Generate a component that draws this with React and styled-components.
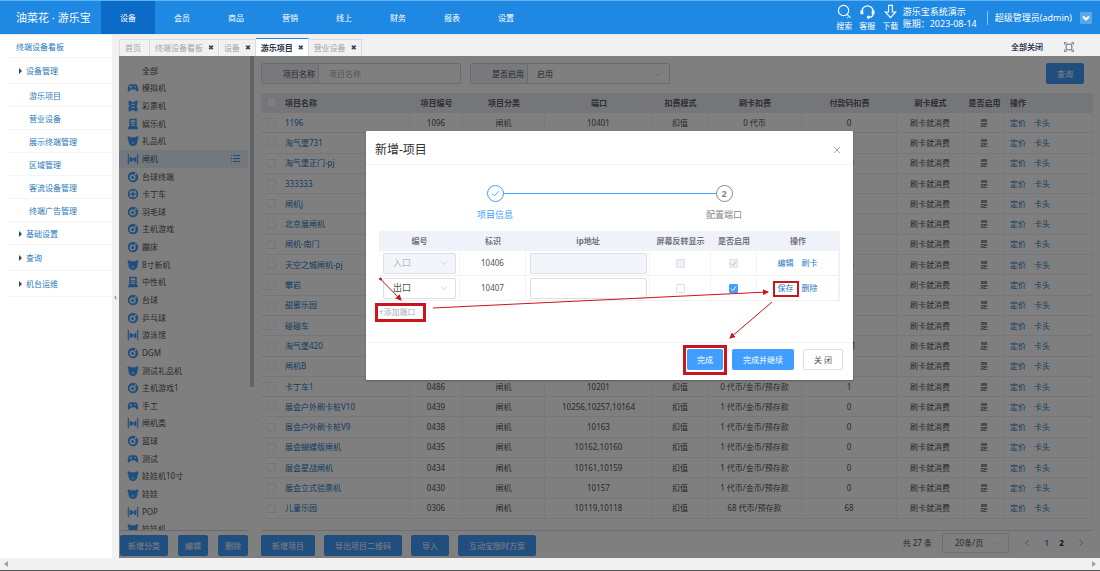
import { useState } from "react";
import styled, { createGlobalStyle, css } from "styled-components";

const GlobalStyle = createGlobalStyle`
  * { box-sizing: border-box; }
  body {
    margin: 0;
    font-family: "Noto Sans", "Noto Sans CJK SC", sans-serif;
    font-size: 8px;
    line-height: 12px;
    color: #505258;
    background: #fff;
  }
  button, input, select { font: inherit; color: inherit; margin: 0; }
  button { border: 0; padding: 0; background: none; cursor: pointer; }
  a { color: inherit; text-decoration: none; }
  ul { list-style: none; margin: 0; padding: 0; }
`;

const Shell = styled.div`
  display: flex;
  flex-direction: column;
  height: 100vh;
  border-bottom: 1px solid #555;
`;

/* header */
const Header = styled.header`
  display: flex;
  flex: none;
  height: 34px;
  border-top: 1px solid #5db2f8;
  background: #1e88e2;
  color: #fff;
`;
const Logo = styled.div`
  width: 101px;
  padding-left: 16px;
  font-size: 11px;
  line-height: 33px;
  white-space: nowrap;
`;
const TopNav = styled.nav`
  display: flex;
  flex: 1;
`;
const TopLink = styled.a`
  width: 54px;
  line-height: 33px;
  text-align: center;
  background: ${(p) => (p.$active ? "#0b6bc6" : "transparent")};
`;
const HeaderTools = styled.div`
  display: flex;
  align-items: center;
  gap: 6px;
  padding-right: 8px;
`;
const ToolButton = styled.button`
  display: flex;
  flex-direction: column;
  align-items: center;
  width: 17px;
  line-height: 13px;
  white-space: nowrap;
  svg { width: 15px; height: 15px; }
`;
const ShopInfo = styled.div`
  width: 78px;
  margin-left: -2px;
  font-size: 9px;
  line-height: 12px;
  white-space: nowrap;
`;
const UserMenu = styled.button`
  display: flex;
  align-items: center;
  gap: 8px;
  height: 14px;
  padding-left: 7px;
  border-left: 1px solid #8cc4f3;
  font-size: 9px;
  white-space: nowrap;
  svg { width: 12px; height: 12px; }
`;

/* left menu */
const Body = styled.div`
  display: flex;
  flex: 1;
  min-height: 0;
  border-top: 1px solid #e4e8ee;
`;
const Sidebar = styled.nav`
  width: 112px;
  color: #1f78b8;
`;
const SideItem = styled.a`
  display: block;
  height: ${(p) => (p.$tall ? 26 : 23)}px;
  margin-left: 8px;
  padding-left: ${(p) => (p.$level ? 21 : 8)}px;
  line-height: ${(p) => (p.$tall ? 26 : 23)}px;
  border-bottom: 1px solid #f4f4f6;
`;
const Caret = styled.span`
  display: inline-block;
  margin: 0 4px 0 3px;
  border-left: 3px solid #2c4a66;
  border-top: 3px solid transparent;
  border-bottom: 3px solid transparent;
`;
const Collapse = styled.button`
  width: 7px;
  background: #f1f1f1;
  color: #555;
  line-height: 12px;
`;

/* tabs */
const Main = styled.div`
  display: flex;
  flex-direction: column;
  flex: 1;
  min-width: 0;
`;
const TabBar = styled.div`
  display: flex;
  align-items: flex-end;
  flex: none;
  height: 21px;
  background: #f1f1f1;
`;
const Tab = styled.div`
  display: flex;
  align-items: center;
  gap: 5px;
  height: 17px;
  padding: 0 ${(p) => (p.$first ? 8 : 4)}px 0 5px;
  border: 1px solid #dcdcdc;
  border-left-width: ${(p) => (p.$first ? 1 : 0)}px;
  border-bottom: 0;
  color: #a2a5aa;
  white-space: nowrap;
  ${(p) =>
    p.$active &&
    css`
      height: 18px;
      border-top: 1px solid #1e88e2;
      background: #fff;
      color: #263445;
      font-weight: bold;
    `}
`;
const TabClose = styled.button`
  color: #2b4560;
  font-family: "DejaVu Sans", sans-serif;
  font-size: 7px;
  line-height: 12px;
`;
const TabActions = styled.div`
  display: flex;
  align-items: center;
  gap: 21px;
  height: 18px;
  margin-left: auto;
  padding-right: 26px;
  font-weight: bold;
  color: #33415c;
  svg { display: block; width: 10px; height: 10px; }
`;

const Workspace = styled.div`
  position: relative;
  display: flex;
  flex: 1;
  min-height: 0;
  background: #fff;
`;

/* category column */
const Categories = styled.aside`
  display: flex;
  flex-direction: column;
  width: 131px;
`;
const CategoryScroll = styled.div`
  display: flex;
  flex: 1;
  min-height: 0;
  overflow: hidden;
  padding-top: 6px;
`;
const CategoryList = styled.ul`
  display: grid;
  grid-auto-rows: 1fr;
  flex: 1;
  min-height: 0;
  margin: 0 2px -8px 0;
`;
const CategoryItem = styled.li`
  display: flex;
  align-items: center;
  min-height: 0;
  padding: 0 8px 0 8px;
  background: ${(p) => (p.$active ? "#e6f1fd" : "transparent")};
`;
const CategoryButton = styled.button`
  display: flex;
  align-items: center;
  flex: 1;
  gap: 3px;
  padding-left: ${(p) => (p.$plain ? 15 : 0)}px;
  svg { width: 12px; height: 12px; color: #409eff; }
`;
const ScrollThumb = styled.div`
  width: 4px;
  height: 66%;
  background: #c4c4c8;
`;
const CategoryActions = styled.div`
  display: flex;
  justify-content: space-between;
  align-items: flex-start;
  height: 28px;
  margin-right: 2px;
  padding: 4px 0 0 1px;
  border-top: 1px solid #d4d4d8;
`;
const PrimaryButton = styled.button`
  height: 21px;
  padding: 0 ${(p) => p.$pad || 8}px;
  border-radius: 2px;
  background: #409eff;
  color: #fff;
  white-space: nowrap;
`;

/* right panel */
const Content = styled.section`
  display: flex;
  flex-direction: column;
  flex: 1;
  min-width: 0;
  padding: 7px 7px 0;
`;
const FilterBar = styled.form`
  display: flex;
  gap: 9px;
  height: 21px;
  margin-bottom: 9px;
  padding-right: 9px;
  button { margin-left: auto; }
`;
const Field = styled.div`
  display: flex;
  width: 200px;
  border: 1px solid #d3d7df;
  border-radius: 2px;
`;
const FieldLabel = styled.label`
  width: 57px;
  padding-right: 3px;
  line-height: 19px;
  text-align: right;
  background: #eff2f8;
  border-right: 1px solid #d3d7df;
`;
const FieldInput = styled.input`
  flex: 1;
  min-width: 0;
  padding: 0 10px;
  border: 0;
  background: none;
  &::placeholder { color: #a9adb5; }
`;
const SelectWrap = styled.span`
  display: flex;
  align-items: center;
  flex: 1;
  min-width: 0;
  padding-right: 7px;
  svg { flex: none; width: 8px; height: 8px; color: #b4b8bf; }
`;
const PlainSelect = styled.select`
  appearance: none;
  flex: 1;
  min-width: 0;
  height: 100%;
  padding: 0 0 0 9px;
  border: 0;
  background: none;
  opacity: 1;
  &:disabled { color: #b4b8bf; }
`;
const TableWrap = styled.div`
  flex: 1;
  min-height: 0;
`;
const Check = styled.input`
  appearance: none;
  display: block;
  width: 9px;
  height: 9px;
  margin: 0 auto;
  border: 1px solid #dde0e7;
  border-radius: 1px;
  background: #fff;
  &:disabled { background: #edf0f7; }
  &:checked {
    background: #409eff url("data:image/svg+xml,%3Csvg xmlns='http://www.w3.org/2000/svg' viewBox='0 0 9 9'%3E%3Cpath d='M2 4.5l2 2 3-4' fill='none' stroke='white'/%3E%3C/svg%3E") center / 9px;
    border-color: #409eff;
  }
  &:checked:disabled {
    background: #edf0f7 url("data:image/svg+xml,%3Csvg xmlns='http://www.w3.org/2000/svg' viewBox='0 0 9 9'%3E%3Cpath d='M2 4.5l2 2 3-4' fill='none' stroke='%23b8bcc6'/%3E%3C/svg%3E") center / 9px;
    border-color: #dde0e7;
  }
`;
const Table = styled.table`
  width: 100%;
  height: 100%;
  table-layout: fixed;
  border-collapse: separate;
  border-spacing: 0;
  th, td {
    padding: 0;
    overflow: hidden;
    text-align: center;
    white-space: nowrap;
    border-bottom: 1px solid #e9ecf2;
  }
  th {
    height: 20px;
    background: #e9ecf4;
    color: #5c5f66;
  }
  td + td { border-right: 1px solid #f1f3f7; }
  th:nth-child(2), td:nth-child(2) { padding-left: 3px; text-align: left; }
  th:last-child, td:last-child { padding-left: 5px; text-align: left; }
  ${Check} { border-color: #eaecf1; }
`;
const RowLink = styled.a`
  color: #2778bf;
  & + & { margin-left: 8px; }
`;
const ContentFooter = styled.footer`
  display: flex;
  gap: 9px;
  height: 28px;
  margin-top: 11px;
  padding-top: 4px;
  border-top: 1px solid #dcdfe6;
`;
const Pagination = styled.div`
  display: flex;
  align-items: center;
  gap: 6px;
  height: 21px;
  margin-left: auto;
  margin-top: -3px;
`;
const PageSize = styled.div`
  display: flex;
  width: 67px;
  height: 20px;
  margin-left: 4px;
  border: 1px solid #dcdfe6;
  border-radius: 2px;
  select { padding-left: 12px; }
`;
const Pages = styled.div`
  display: flex;
`;
const PageButton = styled.button`
  width: ${(p) => (p.$arrow ? 24 : 15)}px;
  font-weight: bold;
  color: ${(p) => (p.$active ? "#409eff" : "#303133")};
  svg { display: block; width: 8px; height: 8px; margin: 0 auto; color: #606266; }
`;

/* dialog */
const Mask = styled.div`
  position: absolute;
  inset: 0;
  display: flex;
  justify-content: center;
  align-items: flex-start;
  padding-top: 75px;
  background: rgba(0, 0, 0, 0.5);
`;
const Dialog = styled.div`
  position: relative;
  width: 487px;
  background: #fff;
  border-radius: 1px;
  box-shadow: 0 1px 2px rgba(0, 0, 0, 0.3);
`;
const DialogHead = styled.div`
  display: flex;
  align-items: center;
  justify-content: space-between;
  height: 34px;
  padding: 5px 11px 0 9px;
  border-bottom: 1px solid #f2f2f4;
  color: #303133;
  svg { display: block; width: 10px; height: 10px; color: #8b8e94; }
`;
const DialogTitle = styled.h2`
  margin: 0;
  font-size: 12px;
  line-height: 16px;
  font-weight: normal;
`;
const DialogBody = styled.div`
  padding: 20px 13px 24px;
`;
const Steps = styled.ol`
  display: flex;
  justify-content: center;
  margin: 0 0 9px;
  padding: 0;
  list-style: none;
`;
const Step = styled.li`
  display: flex;
  flex-direction: column;
  align-items: center;
  gap: 6px;
  width: 38px;
  color: ${(p) => (p.$done ? "#409eff" : "#85888e")};
  font-size: 9px;
  line-height: 14px;
  white-space: nowrap;
`;
const StepMark = styled.span`
  display: grid;
  place-items: center;
  width: 17px;
  height: 17px;
  border: 1px solid currentColor;
  border-radius: 50%;
  font-weight: bold;
  svg { width: 9px; height: 9px; }
`;
const StepLine = styled.li`
  width: 213px;
  height: 1px;
  margin: 8px -11px 0;
  background: #409eff;
`;
const PortTable = styled.table`
  width: 100%;
  table-layout: fixed;
  border-spacing: 0;
  border-right: 1px solid #eef0f5;
  th {
    height: 20px;
    padding: 0;
    background: #eff2f8;
    color: #73767d;
    white-space: nowrap;
  }
  td {
    height: 25px;
    padding: 0 3px;
    text-align: center;
    border-bottom: 1px solid #eef0f5;
    border-right: 1px solid #f3f4f8;
  }
  td:first-child { padding-left: 4px; }
  td:nth-child(3) { padding: 0 2px 0 4px; }
`;
const CellSelect = styled.div`
  display: flex;
  height: 21px;
  border: 1px solid #dcdfe6;
  border-radius: 2px;
  font-size: 9px;
  background: ${(p) => (p.$disabled ? "#f3f5fa" : "#fff")};
`;
const CellInput = styled.input`
  display: block;
  width: 100%;
  height: 21px;
  border: 1px solid #dcdfe6;
  border-radius: 2px;
  background: #fff;
  &:disabled { background: #f3f5fa; }
`;
const AddPort = styled.button`
  display: block;
  margin-top: 5px;
  color: #a9acb2;
`;
const DialogFoot = styled.div`
  display: flex;
  justify-content: flex-end;
  gap: 9px;
  padding: 6px 10px 10px;
  border-top: 1px solid #f2f2f4;
`;
const CloseButton = styled.button`
  padding: 0 10px;
  border: 1px solid #dcdfe6;
  border-radius: 2px;
`;
const Annotations = styled.svg`
  position: absolute;
  left: 0;
  top: 0;
  overflow: visible;
  pointer-events: none;
`;

const ScrollBar = styled.div`
  display: flex;
  align-items: center;
  justify-content: space-between;
  flex: none;
  height: 12px;
  padding: 0 3px;
  background: #f1f1f1;
  svg { width: 6px; height: 6px; color: #a0a0a0; }
`;

const ICONS = {
  pad: (
    <path d="M4.500 3h7C14 3 15 8 15 11c0 2-1.600 2.500-2.700.8L11 10H5l-1.300 1.800C2.600 13.500 1 13 1 11c0-3 1-8 3.500-8zM4.500 5v1h-1v1.200h1v1h1.200v-1h1V6h-1V5zm6.500.2a1 1 0 100 2 1 1 0 000-2z" fillRule="evenodd" />
  ),
  ticket: (
    <path d="M2 1h3l1 1.500h4L11 1h3v5l-1.500 2L14 10v5h-3l-1-1.500H6L5 15H2v-5l1.500-2L2 6zm4 4v1.500h4V5zm0 4v1.500h4V9z" fillRule="evenodd" />
  ),
  machine: (
    <path d="M3 1h10v11h1.500v3h-13v-3H3zm2 2v2.500h6V3zm0 4v1.200h6V7zm0 2.500v1.200h6V9.500z" fillRule="evenodd" />
  ),
  bear: (
    <path d="M1 2.500C2.500 1 4 2 4.500 3h7c.5-1 2-2 3.500-.5.8 1.500 0 2.500-.8 3C14.500 11 12 14.500 8 14.500S1.500 11 1.800 5.500C1 5 .2 4 1 2.500zM6 10l2 2 2-2z" fillRule="evenodd" />
  ),
  gate: (
    <path d="M1 1h1.500v14H1zM13.500 1H15v14h-1.500zM3.500 4.500l3.500 2v4l-3.500 2zM12.500 4.500l-3.500 2v4l3.500 2zM6.500 7h3v3h-3z" />
  ),
  ball: (
    <>
      <path d="M8 1a7 7 0 100 14A7 7 0 008 1zM7.500 4.500a4 4 0 110 8 4 4 0 010-8zM11.500 3a1.200 1.200 0 110 2.400 1.200 1.200 0 010-2.400z" fillRule="evenodd" />
      <circle cx="7.500" cy="8.500" r="2" />
    </>
  ),
  wheel: (
    <path d="M8 1a7 7 0 100 14A7 7 0 008 1zM7.300 3v3a2 2 0 00-1.300 1.300H3A5 5 0 017.300 3zm1.400 0A5 5 0 0113 7.300h-3A2 2 0 008.700 6zM3 8.700h3A2 2 0 007.300 10v3A5 5 0 013 8.700zm7 0h3A5 5 0 018.700 13v-3A2 2 0 0010 8.700z" fillRule="evenodd" />
  ),
};

const Glyph = ({ name }) => (
  <svg viewBox="0 0 16 16" fill="currentColor" aria-hidden="true">{ICONS[name]}</svg>
);

const Stroke = ({ d, width = 1.2, children }) => (
  <svg viewBox="0 0 16 16" fill="none" stroke="currentColor" strokeWidth={width} aria-hidden="true">
    <path d={d} />
    {children}
  </svg>
);

const DOWN = "M2 5l6 6 6-6";

const topLinks = ["设备", "会员", "商品", "营销", "线上", "财务", "报表", "设置"];

const sideItems = [
  { text: "终端设备看板" },
  { text: "设备管理", caret: true, tall: true },
  { text: "游乐项目", level: 1 },
  { text: "营业设备", level: 1 },
  { text: "展示终端管理", level: 1 },
  { text: "区域管理", level: 1 },
  { text: "客流设备管理", level: 1 },
  { text: "终端广告管理", level: 1 },
  { text: "基础设置", caret: true },
  { text: "查询", caret: true, tall: true },
  { text: "机台运维", caret: true, tall: true },
];

const tabs = ["首页", "终端设备看板", "设备", "游乐项目", "营业设备"];

const categories = [
  ["全部"],
  ["模拟机", "pad"],
  ["彩票机", "ticket"],
  ["娱乐机", "machine"],
  ["礼品机", "bear"],
  ["闸机", "gate"],
  ["台球终端", "ball"],
  ["卡丁车", "wheel"],
  ["羽毛球", "ball"],
  ["主机游戏", "ball"],
  ["蹦床", "ball"],
  ["8寸新机", "bear"],
  ["中性机", "machine"],
  ["台球", "ball"],
  ["乒乓球", "ball"],
  ["游泳馆", "gate"],
  ["DGM", "ball"],
  ["测试礼品机", "bear"],
  ["主机游戏1", "ball"],
  ["手工", "pad"],
  ["闸机类", "gate"],
  ["篮球", "ball"],
  ["测试", "pad"],
  ["娃娃机10寸", "bear"],
  ["娃娃", "bear"],
  ["POP", "gate"],
  ["娃娃机", "bear"],
];

const projects = [
  ["1196", "1096", "10401", "0 代币", "0"],
  ["淘气堡731", "1095", "10400", "0 代币", "0"],
  ["淘气堡正门-pj", "1094", "10399", "0 代币", "10"],
  ["333333", "1093", "10398", "0 代币", "0"],
  ["闸机j", "1092", "10397", "0 代币", "0"],
  ["北京展闸机", "1091", "10396", "0 代币", "0"],
  ["闸机-南门", "1090", "10395", "0 代币", "0"],
  ["天空之城闸机-pj", "1089", "10394", "0 代币", "10"],
  ["攀岩", "1088", "10393", "0 代币", "0"],
  ["甜蜜乐园", "1087", "10392", "0 代币", "0"],
  ["碰碰车", "1086", "10391", "0 代币", "0"],
  ["淘气堡420", "1085", "10390", "0 代币", "101"],
  ["闸机B", "1084", "10389", "0 代币", "0"],
  ["卡丁车1", "0486", "10201", "0 代币/金币/预存款", "1"],
  ["展会户外刷卡桩V10", "0439", "10256,10257,10164", "1 代币/金币/预存款", "0"],
  ["展会户外刷卡桩V9", "0438", "10163", "1 代币/金币/预存款", "0"],
  ["展会蝴蝶版闸机", "0435", "10162,10160", "1 代币/金币/预存款", "0"],
  ["展会星战闸机", "0434", "10161,10159", "1 代币/金币/预存款", "0"],
  ["展会立式验票机", "0430", "10157", "1 代币/金币/预存款", "0"],
  ["儿童乐园", "0306", "10119,10118", "68 代币/预存款", "68"],
];

const ports = [
  { kind: "入口", id: "10406", locked: true, actions: ["编辑", "刷卡"] },
  { kind: "出口", id: "10407", locked: false, actions: ["保存", "删除"] },
];

const ProjectTable = () => (
  <Table>
    <colgroup>
      <col style={{ width: 21 }} />
      <col />
      {[53, 82, 108, 55, 94, 95, 67, 41, 88].map((w, i) => (
        <col key={i} style={{ width: w }} />
      ))}
    </colgroup>
    <thead>
      <tr>
        <th><Check type="checkbox" aria-label="全选" /></th>
        {["项目名称", "项目编号", "项目分类", "端口", "扣费模式", "刷卡扣费", "付款码扣费", "刷卡模式", "是否启用", "操作"].map((h) => (
          <th key={h}>{h}</th>
        ))}
      </tr>
    </thead>
    <tbody>
      {projects.map(([name, code, port, fee, payFee]) => (
        <tr key={name}>
          <td><Check type="checkbox" aria-label={name} /></td>
          <td><RowLink href="#">{name}</RowLink></td>
          <td>{code}</td>
          <td>闸机</td>
          <td>{port}</td>
          <td>扣值</td>
          <td>{fee}</td>
          <td>{payFee}</td>
          <td>刷卡就消费</td>
          <td>是</td>
          <td><RowLink href="#">定价</RowLink><RowLink href="#">卡头</RowLink></td>
        </tr>
      ))}
    </tbody>
  </Table>
);

const PortDialog = () => {
  const [enabled, setEnabled] = useState(true);

  return (
    <Dialog role="dialog" aria-labelledby="dialog-title">
      <DialogHead>
        <DialogTitle id="dialog-title">新增-项目</DialogTitle>
        <button type="button" aria-label="关闭弹窗"><Stroke d="M3 3l10 10M13 3L3 13" /></button>
      </DialogHead>
      <DialogBody>
        <Steps>
          <Step $done>
            <StepMark><Stroke d="M2 8l4 4 8-8" width={1.6} /></StepMark>
            项目信息
          </Step>
          <StepLine aria-hidden="true" />
          <Step>
            <StepMark>2</StepMark>
            配置端口
          </Step>
        </Steps>
        <PortTable>
          <colgroup>
            {[81, 66, 124, 61, 46, 82].map((w, i) => (
              <col key={i} style={{ width: w }} />
            ))}
          </colgroup>
          <thead>
            <tr>
              {["编号", "标识", "ip地址", "屏幕反转显示", "是否启用", "操作"].map((h) => (
                <th key={h}>{h}</th>
              ))}
            </tr>
          </thead>
          <tbody>
            {ports.map((p) => (
              <tr key={p.id}>
                <td>
                  <CellSelect $disabled={p.locked}>
                    <SelectWrap>
                      <PlainSelect aria-label="编号" disabled={p.locked} defaultValue={p.kind}>
                        <option>入口</option>
                        <option>出口</option>
                      </PlainSelect>
                      <Stroke d={DOWN} />
                    </SelectWrap>
                  </CellSelect>
                </td>
                <td>{p.id}</td>
                <td><CellInput type="text" aria-label="ip地址" disabled={p.locked} /></td>
                <td><Check type="checkbox" aria-label="屏幕反转显示" disabled={p.locked} /></td>
                <td>
                  <Check
                    type="checkbox"
                    aria-label="是否启用"
                    disabled={p.locked}
                    checked={p.locked || enabled}
                    onChange={(e) => setEnabled(e.target.checked)}
                  />
                </td>
                <td>
                  {p.actions.map((a) => <RowLink href="#" key={a}>{a}</RowLink>)}
                </td>
              </tr>
            ))}
          </tbody>
        </PortTable>
        <AddPort type="button">+添加端口</AddPort>
      </DialogBody>
      <DialogFoot>
        <PrimaryButton type="button" $pad={10}>完成</PrimaryButton>
        <PrimaryButton type="button" $pad={11}>完成并继续</PrimaryButton>
        <CloseButton type="button">关 闭</CloseButton>
      </DialogFoot>
      <Annotations width="487" height="249" viewBox="0 0 487 249" fill="none" stroke="#cc141c" aria-hidden="true">
        <defs>
          <marker id="tip" viewBox="0 0 6 6" refX="5" refY="3" markerWidth="6" markerHeight="6" orient="auto" markerUnits="userSpaceOnUse">
            <path d="M0 0l6 3-6 3z" fill="#cc141c" stroke="none" />
          </marker>
        </defs>
        <rect x="10.500" y="173.500" width="48" height="16" strokeWidth="3" />
        <rect x="408" y="151" width="24" height="14" strokeWidth="2" />
        <rect x="318.500" y="215.500" width="41" height="27" strokeWidth="3" />
        <circle cx="14.500" cy="148" r="1" fill="#cc141c" />
        <path d="M14.500 148L35 169" markerEnd="url(#tip)" />
        <path d="M67 177l335-16" markerEnd="url(#tip)" />
        <path d="M406 171l-42 36" markerEnd="url(#tip)" />
      </Annotations>
    </Dialog>
  );
};

const App = () => {
  const [category, setCategory] = useState("闸机");

  return (
    <Shell>
      <GlobalStyle />
      <Header>
        <Logo>油菜花 · 游乐宝</Logo>
        <TopNav>
          {topLinks.map((t, i) => <TopLink href="#" key={t} $active={i === 0}>{t}</TopLink>)}
        </TopNav>
        <HeaderTools>
          <ToolButton type="button">
            <Stroke d="M10.500 11l4 3.500M11 14.500h1" width={1.2}>
              <circle cx="7" cy="7" r="5.500" />
            </Stroke>
            搜索
          </ToolButton>
          <ToolButton type="button">
            <Stroke d="M2 9V8a6 6 0 0112 0v1M14 10c0 2.500-2 4-4.500 4" width={1.4}>
              <path d="M2 7v4M14 7v4" strokeWidth="3" />
              <circle cx="9" cy="14" r="1" fill="currentColor" />
            </Stroke>
            客服
          </ToolButton>
          <ToolButton type="button">
            <Stroke d="M6 1.500h4v7h3.500L8 14.500 2.500 8.500H6z" width={1.2} />
            下载
          </ToolButton>
          <ShopInfo>
            游乐宝系统演示
            <br />
            账期：2023-08-14
          </ShopInfo>
          <UserMenu type="button">
            超级管理员(admin)
            <svg viewBox="0 0 12 12" aria-hidden="true">
              <rect width="12" height="12" rx="1" fill="#5aa6ea" />
              <path d="M3 4.500l3 3 3-3" fill="none" stroke="#fff" strokeWidth="2" />
            </svg>
          </UserMenu>
        </HeaderTools>
      </Header>

      <Body>
        <Sidebar>
          {sideItems.map((s) => (
            <SideItem href="#" key={s.text} $tall={s.tall} $level={s.level}>
              {s.caret && <Caret />}
              {s.text}
            </SideItem>
          ))}
        </Sidebar>
        <Collapse type="button" aria-label="收起菜单">‹</Collapse>

        <Main>
          <TabBar>
            {tabs.map((t, i) => (
              <Tab key={t} $first={i === 0} $active={t === "游乐项目"}>
                {t}
                {i > 0 && <TabClose type="button" aria-label={`关闭${t}`}>✖</TabClose>}
              </Tab>
            ))}
            <TabActions>
              <button type="button">全部关闭</button>
              <button type="button" aria-label="全屏">
                <Stroke d="M1 4V1h3M12 1h3v3M15 12v3h-3M4 15H1v-3M3.500 3.500h9v9h-9z" />
              </button>
            </TabActions>
          </TabBar>

          <Workspace>
            <Categories>
              <CategoryScroll>
                <CategoryList>
                  {categories.map(([name, icon]) => (
                    <CategoryItem key={name} $active={name === category}>
                      <CategoryButton type="button" $plain={!icon} onClick={() => setCategory(name)}>
                        {icon && <Glyph name={icon} />}
                        {name}
                      </CategoryButton>
                      {name === category && (
                        <svg width="9" height="9" viewBox="0 0 9 9" stroke="#409eff" aria-hidden="true">
                          <path d="M0 1.500h1M2 1.500h7M0 4.500h1M2 4.500h7M0 7.500h1M2 7.500h7" />
                        </svg>
                      )}
                    </CategoryItem>
                  ))}
                </CategoryList>
              </CategoryScroll>
              <CategoryActions>
                <PrimaryButton type="button">新增分类</PrimaryButton>
                <PrimaryButton type="button" $pad={7}>编辑</PrimaryButton>
                <PrimaryButton type="button" $pad={7}>删除</PrimaryButton>
              </CategoryActions>
            </Categories>
            <ScrollThumb />

            <Content>
              <FilterBar onSubmit={(e) => e.preventDefault()}>
                <Field>
                  <FieldLabel htmlFor="name">项目名称</FieldLabel>
                  <FieldInput id="name" type="text" placeholder="项目名称" />
                </Field>
                <Field>
                  <FieldLabel htmlFor="enabled">是否启用</FieldLabel>
                  <SelectWrap>
                    <PlainSelect id="enabled">
                      <option>启用</option>
                      <option>停用</option>
                    </PlainSelect>
                    <Stroke d={DOWN} />
                  </SelectWrap>
                </Field>
                <PrimaryButton type="submit" $pad={11}>查询</PrimaryButton>
              </FilterBar>

              <TableWrap>
                <ProjectTable />
              </TableWrap>

              <ContentFooter>
                <PrimaryButton type="button" $pad={11}>新增项目</PrimaryButton>
                <PrimaryButton type="button" $pad={11}>导出项目二维码</PrimaryButton>
                <PrimaryButton type="button" $pad={11}>导入</PrimaryButton>
                <PrimaryButton type="button" $pad={11}>互动宝限时方案</PrimaryButton>
                <Pagination>
                  共 27 条
                  <PageSize>
                    <SelectWrap>
                      <PlainSelect aria-label="每页条数">
                        <option>20条/页</option>
                        <option>50条/页</option>
                      </PlainSelect>
                      <Stroke d={DOWN} />
                    </SelectWrap>
                  </PageSize>
                  <Pages>
                    <PageButton type="button" $arrow aria-label="上一页"><Stroke d="M11 2L5 8l6 6" /></PageButton>
                    <PageButton type="button" $active>1</PageButton>
                    <PageButton type="button">2</PageButton>
                    <PageButton type="button" $arrow aria-label="下一页"><Stroke d="M5 2l6 6-6 6" /></PageButton>
                  </Pages>
                </Pagination>
              </ContentFooter>
            </Content>

            <Mask>
              <PortDialog />
            </Mask>
          </Workspace>
        </Main>
      </Body>

      <ScrollBar>
        <svg viewBox="0 0 6 6" fill="currentColor" aria-hidden="true"><path d="M5 0v6L1 3z" /></svg>
        <svg viewBox="0 0 6 6" fill="currentColor" aria-hidden="true"><path d="M1 0v6l4-3z" /></svg>
      </ScrollBar>
    </Shell>
  );
};

export default App;
